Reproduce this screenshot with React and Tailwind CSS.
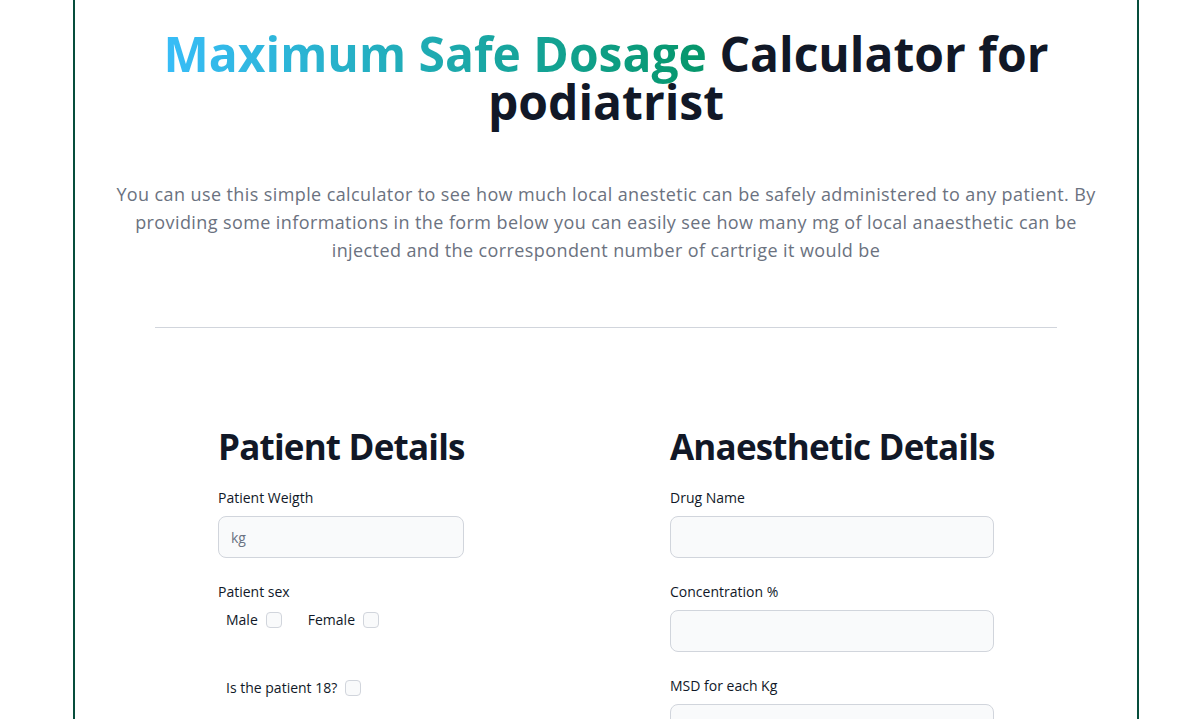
import React from "react";

const font = { fontFamily: '"Open Sans", "Noto Sans", sans-serif' };

function Field({ label, placeholder, className = "" }) {
  return (
    <div className={className}>
      <label className="block mb-2 text-sm font-medium text-gray-900">{label}</label>
      <input
        type="text"
        placeholder={placeholder}
        className="block w-full h-[42px] px-3 rounded-lg border border-gray-300 bg-gray-50 text-sm text-gray-900 placeholder:text-gray-500 outline-none"
      />
    </div>
  );
}

function Check({ label, className = "" }) {
  return (
    <label className={"flex items-center text-sm font-medium text-gray-900 " + className}>
      <span>{label}</span>
      <input
        type="checkbox"
        className="appearance-none ml-2 w-4 h-4 rounded border border-gray-300 bg-gray-50"
      />
    </label>
  );
}

export default function App() {
  return (
    <div className="min-h-[719px] bg-white" style={font}>
      <div className="ml-[73px] w-[1066px] min-h-[719px] border-x-2 border-[#074e3c] pt-[30px] pb-10">
        <h1 className="text-center text-5xl leading-[48px] font-bold text-[#111827]">
          <span className="bg-gradient-to-r from-[#38bdf8] to-[#059669] bg-clip-text text-transparent">
            Maximum Safe Dosage
          </span>{" "}
          Calculator for
          <br />
          podiatrist
        </h1>
        <p className="mt-[54px] text-center text-lg leading-7 tracking-[0.4px] text-[#6b7280]">
          You can use this simple calculator to see how much local anestetic can be safely administered to any patient. By
          <br />
          providing some informations in the form below you can easily see how many mg of local anaesthetic can be
          <br />
          injected and the correspondent number of cartrige it would be
        </p>
        <hr className="mt-[63px] mx-20 border-gray-300" />
        <div className="mt-[99px] flex justify-between px-[143px]">
          <div className="w-[246px]">
            <h2 className="text-[35px] leading-10 tracking-[-0.8px] font-bold text-[#111827] whitespace-nowrap mb-[21px]">
              Patient Details
            </h2>
            <Field label="Patient Weigth" placeholder="kg" className="mb-6" />
            <div>
              <label className="block mb-2 text-sm font-medium text-gray-900">Patient sex</label>
              <div className="flex items-center pl-2">
                <Check label="Male" />
                <Check label="Female" className="ml-[26px]" />
              </div>
              <div className="mt-[48px] pl-2">
                <Check label="Is the patient 18?" />
              </div>
            </div>
          </div>
          <div className="w-[324px]">
            <h2 className="text-[35px] leading-10 tracking-[-0.8px] font-bold text-[#111827] whitespace-nowrap mb-[21px]">
              Anaesthetic Details
            </h2>
            <Field label="Drug Name" className="mb-6" />
            <Field label="Concentration %" className="mb-6" />
            <Field label="MSD for each Kg" className="mb-6" />
          </div>
        </div>
      </div>
    </div>
  );
}
